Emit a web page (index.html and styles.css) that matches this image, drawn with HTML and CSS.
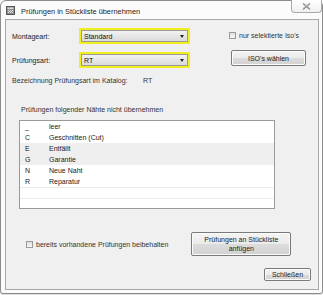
FILE: index.html
```html
<!DOCTYPE html>
<html>
<head>
<meta charset="utf-8">
<link rel="stylesheet" href="styles.css">
</head>
<body>
<div class="window">
  <div class="titlebar">
    <svg class="appicon" width="9" height="9" viewBox="0 0 9 9">
      <rect x="0.5" y="0.5" width="8" height="8" fill="#8d8d8d" stroke="#555"/>
      <rect x="1.5" y="1.5" width="6" height="1.5" fill="#d8d8d8"/>
      <path d="M2 4h1v1H2zM4 4h1v1H4zM6 4h1v1H6zM3 5h1v1H3zM5 5h1v1H5zM2 6h1v1H2zM4 6h1v1H4zM6 6h1v1H6z" fill="#e6e6e6"/>
    </svg>
    <span class="title">Prüfungen in Stückliste übernehmen</span>
    <div class="closebox">
      <svg width="9" height="7" viewBox="0 0 9 7">
        <path d="M1 0.5L8 6.5M8 0.5L1 6.5" stroke="#8a8a8a" stroke-width="1.2" fill="none"/>
        <path d="M2.5 0.5L8 5M6.5 0.5L1 5" stroke="#c8c8c8" stroke-width="0.6" fill="none"/>
      </svg>
    </div>
  </div>
  <div class="client">
    <div class="row r1">
      <span class="lbl">Montageart:</span>
      <div class="combo"><span class="cval">Standard</span><i class="arrow"></i></div>
      <div class="chk top"><span class="box"></span><span>nur selektierte Iso's</span></div>
    </div>
    <div class="row r2">
      <span class="lbl">Prüfungsart:</span>
      <div class="combo"><span class="cval">RT</span><i class="arrow"></i></div>
      <div class="btn iso">ISO's wählen</div>
    </div>
    <div class="row r3">
      <span class="lbl wide">Bezeichnung Prüfungsart im Katalog:</span>
      <span>RT</span>
    </div>
    <div class="listlabel">Prüfungen folgender Nähte nicht übernehmen</div>
    <div class="list">
      <div class="item"><span class="k">_</span><span>leer</span></div>
      <div class="item"><span class="k">C</span><span>Geschnitten (Cut)</span></div>
      <div class="item sel"><span class="k">E</span><span>Entfällt</span></div>
      <div class="item sel"><span class="k">G</span><span>Garantie</span></div>
      <div class="item"><span class="k">N</span><span>Neue Naht</span></div>
      <div class="item"><span class="k">R</span><span>Reparatur</span></div>
      <div class="item empty"></div>
      <div class="item empty"></div>
    </div>
    <div class="row bottom">
      <div class="chk keep"><span class="box"></span><span>bereits vorhandene Prüfungen beibehalten</span></div>
      <div class="btn big">Prüfungen an Stückliste<br>anfügen</div>
    </div>
    <div class="footer">
      <div class="btn closebtn">Schließen</div>
    </div>
  </div>
</div>
</body>
</html>
```

FILE: styles.css
```css
html, body {
  margin: 0;
  padding: 0;
  background: #ffffff;
}
body {
  font-family: "Liberation Sans", Arial, sans-serif;
  font-size: 7px;
  color: #222;
  width: 323px;
  height: 295px;
  overflow: hidden;
}
.window {
  box-sizing: border-box;
  width: 323px;
  height: 294px;
  border: 1px solid #8c8c8c;
  border-radius: 6px 6px 3px 3px;
  background: #fbfbfb;
  padding: 0 3px 3px 4px;
  display: flex;
  flex-direction: column;
  box-shadow: 0 1px 1px rgba(0,0,0,0.15);
}
.titlebar {
  height: 18px;
  display: flex;
  align-items: flex-start;
}
.appicon {
  margin: 5px 0 0 1px;
  flex: none;
}
.title {
  font-size: 7.4px;
  color: #1e1e1e;
  margin: 6px 0 0 6px;
  line-height: 9px;
}
.closebox {
  margin: -1px -3px 0 auto;
  width: 31px;
  height: 13px;
  box-sizing: border-box;
  border: 1px solid #a9a9a9;
  border-top: none;
  border-radius: 0 0 4px 4px;
  background: linear-gradient(#ffffff, #f0f0f0);
  display: flex;
  align-items: center;
  justify-content: center;
}
.client {
  flex: 1;
  border: 1px solid #a8a8a8;
  background: #f0f0f0;
  display: flex;
  flex-direction: column;
}
.row {
  display: flex;
  align-items: center;
}
.r1 {
  margin-top: 8px;
  height: 16px;
  padding-left: 6px;
}
.r2 {
  margin-top: 8px;
  height: 16px;
  padding-left: 6px;
}
.lbl {
  width: 67px;
  flex: none;
}
.lbl.wide {
  width: 131px;
}
.combo {
  box-sizing: border-box;
  width: 111px;
  height: 16px;
  border: 2px solid #f2ee1e;
  box-shadow: inset 0 0 0 1px #9b9b9b;
  background: linear-gradient(#f6f6f6, #e6e6e6 50%, #dadada);
  display: flex;
  align-items: center;
  padding: 0 4px 0 3px;
  flex: none;
}
.cval {
  flex: 1;
  color: #111;
}
.arrow {
  width: 0;
  height: 0;
  border-left: 2.5px solid transparent;
  border-right: 2.5px solid transparent;
  border-top: 3px solid #222;
}
.chk {
  display: flex;
  align-items: center;
  color: #333;
}
.chk.top {
  margin-left: 39px;
  margin-top: -2px;
}
.box {
  box-sizing: border-box;
  width: 7px;
  height: 7px;
  border: 1px solid #9a9a9a;
  background: linear-gradient(#dedede, #f8f8f8);
  margin-right: 3px;
  flex: none;
}
.btn {
  box-sizing: border-box;
  border: 1px solid #7a7a7a;
  border-radius: 2px;
  background: linear-gradient(#f3f3f3, #ebebeb 50%, #dcdcdc 51%, #d2d2d2);
  box-shadow: inset 0 0 0 1px #fbfbfb;
  display: flex;
  align-items: center;
  justify-content: center;
  text-align: center;
  color: #222;
  flex: none;
}
.iso {
  width: 75px;
  height: 16px;
  margin-left: 41px;
  margin-top: -4px;
}
.r3 {
  margin-top: 9px;
  height: 8px;
  line-height: 8px;
  padding-left: 6px;
  color: #333;
}
.listlabel {
  margin-top: 21px;
  height: 8px;
  line-height: 8px;
  padding-left: 15px;
  color: #333;
}
.list {
  margin: 6px 0 0 13px;
  box-sizing: border-box;
  width: 256px;
  height: 89px;
  border: 1px solid #9a9a9a;
  background: #ffffff;
  display: flex;
  flex-direction: column;
}
.item {
  height: 11px;
  flex: none;
  display: flex;
  align-items: center;
  line-height: 11px;
  color: #222;
}
.item .k {
  width: 29px;
  padding-left: 5px;
  box-sizing: border-box;
  flex: none;
}
.item.sel {
  background: #efefef;
}
.item.empty {
  box-sizing: border-box;
  border-top: 1px solid #ececec;
}
.bottom {
  margin-top: 23px;
  height: 24px;
}
.chk.keep {
  margin-left: 20px;
}
.big {
  width: 100px;
  height: 24px;
  margin-left: 23px;
  line-height: 9px;
}
.footer {
  display: flex;
  justify-content: flex-end;
  padding-right: 7px;
  margin-top: 12px;
}
.closebtn {
  width: 47px;
  height: 13px;
}
```
